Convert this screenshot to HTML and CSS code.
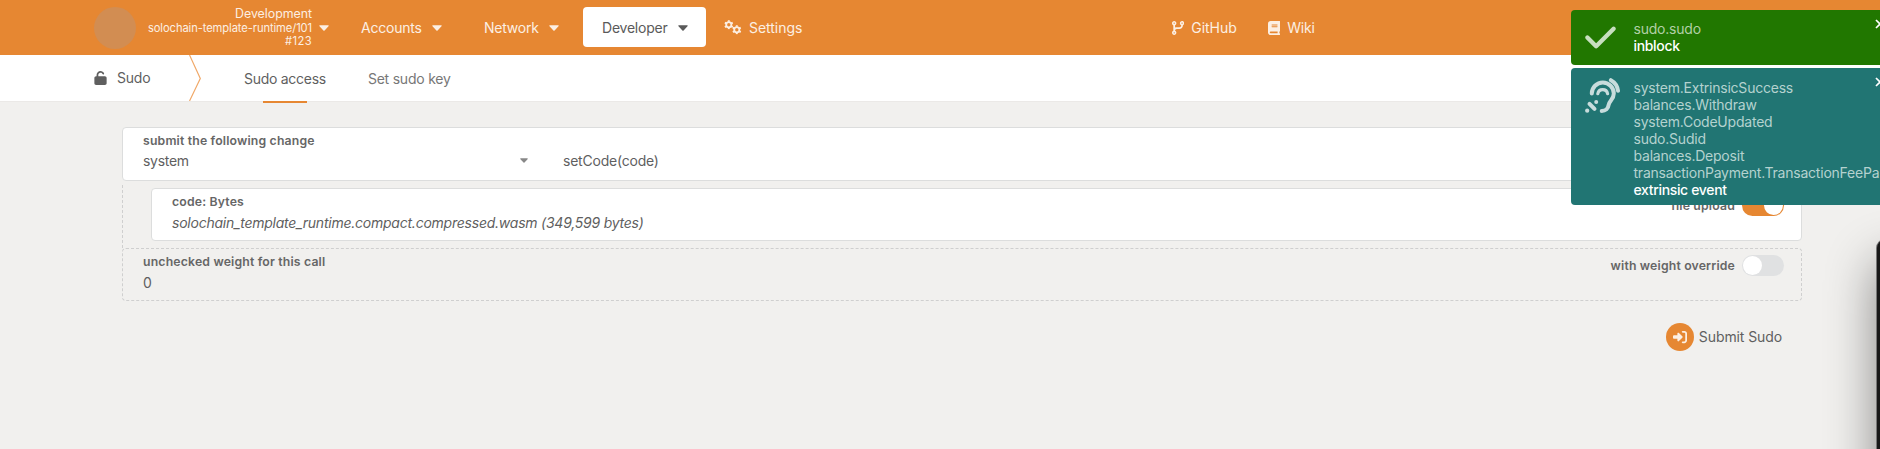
FILE: index.html
```html
<!DOCTYPE html>
<html lang="en">
<head>
<meta charset="utf-8">
<title>Sudo</title>
<link rel="stylesheet" href="styles.css">
</head>
<body>
<svg width="0" height="0" class="defs">
  <symbol id="caret" viewBox="0 0 10 6"><path d="M1 .3h8c.6 0 .9.6.5 1L5.6 5.4c-.4.4-.8.4-1.2 0L.5 1.3C.1.9.4.3 1 .3z" fill="currentColor"/></symbol>
  <symbol id="gear" viewBox="0 0 10 10"><circle cx="5" cy="5" r="2.7" fill="none" stroke="currentColor" stroke-width="1.9"/><path d="M5 .3v1.6M5 8.1v1.6M.9 2.65l1.4.8M7.7 6.55l1.4.8M.9 7.35l1.4-.8M7.7 3.45l1.4-.8" stroke="currentColor" stroke-width="2"/></symbol>
</svg>
<header class="header">
  <span class="logo"></span>
  <div class="chain"><div class="chain-name">Development</div><div>solochain-template-runtime/101</div><div class="block">#123</div></div>
  <svg class="caret chain-caret"><use href="#caret"/></svg>
  <nav class="nav">
    <a class="item accounts">Accounts<svg class="caret"><use href="#caret"/></svg></a>
    <a class="item network">Network<svg class="caret"><use href="#caret"/></svg></a>
    <a class="item active">Developer<svg class="caret"><use href="#caret"/></svg></a>
    <a class="item settings"><svg class="gears" viewBox="0 0 18 15"><use href="#gear" x="0" y="0" width="9.6" height="9.6"/><use href="#gear" x="8" y="5" width="9.6" height="9.6"/></svg>Settings</a>
  </nav>
  <nav class="links">
    <a class="item github"><svg viewBox="0 0 448 512"><path fill="currentColor" d="M80 104a24 24 0 1 0 0-48 24 24 0 1 0 0 48zm80-24c0 32.800-19.700 61-48 73.300l0 87.800c18.800-10.900 40.700-17.100 64-17.100l96 0c35.300 0 64-28.700 64-64l0-6.700C307.700 141 288 112.800 288 80c0-44.200 35.800-80 80-80s80 35.800 80 80c0 32.800-19.700 61-48 73.300l0 6.700c0 70.700-57.300 128-128 128l-96 0c-35.300 0-64 28.700-64 64l0 6.700c28.300 12.300 48 40.500 48 73.300c0 44.200-35.800 80-80 80s-80-35.800-80-80c0-32.800 19.700-61 48-73.300l0-6.700 0-198.700C19.700 141 0 112.800 0 80C0 35.800 35.800 0 80 0s80 35.800 80 80zm232 0a24 24 0 1 0 -48 0 24 24 0 1 0 48 0zM80 456a24 24 0 1 0 0-48 24 24 0 1 0 0 48z"/></svg>GitHub</a>
    <a class="item wiki"><svg viewBox="0 0 448 512"><path fill="currentColor" d="M96 0C43 0 0 43 0 96L0 416c0 53 43 96 96 96l288 0 32 0c17.700 0 32-14.300 32-32s-14.300-32-32-32l0-64c17.700 0 32-14.300 32-32l0-320c0-17.700-14.300-32-32-32L384 0 96 0zm0 384l256 0 0 64L96 448c-17.700 0-32-14.300-32-32s14.300-32 32-32zm32-240c0-8.800 7.200-16 16-16l192 0c8.800 0 16 7.200 16 16s-7.200 16-16 16l-192 0c-8.800 0-16-7.200-16-16zm16 48l192 0c8.800 0 16 7.200 16 16s-7.200 16-16 16l-192 0c-8.800 0-16-7.200-16-16s7.200-16 16-16z"/></svg>Wiki</a>
  </nav>
</header>
<div class="tabs">
  <div class="section"><svg viewBox="0 0 448 512"><path fill="currentColor" d="M144 144c0-44.200 35.800-80 80-80c31.900 0 59.400 18.600 72.300 45.700c7.600 16 26.700 22.800 42.600 15.200s22.800-26.700 15.200-42.600C331 33.700 281.500 0 224 0C144.500 0 80 64.500 80 144l0 48-16 0c-35.300 0-64 28.700-64 64L0 448c0 35.300 28.700 64 64 64l320 0c35.300 0 64-28.700 64-64l0-192c0-35.300-28.700-64-64-64l-240 0 0-48z"/></svg>Sudo</div>
  <svg class="divider" viewBox="0 0 12 46"><path d="M.5 0L11.300 23.500.5 46" fill="none" stroke="#f0a868" stroke-width="1.200"/></svg>
  <a class="tab current">Sudo access</a>
  <a class="tab">Set sudo key</a>
</div>
<main class="content">
  <section class="card call">
    <label>submit the following change</label>
    <div class="selects"><div class="select">system<svg class="small-caret"><use href="#caret"/></svg></div><div>setCode(code)</div></div>
  </section>
  <div class="params">
    <section class="card param">
      <div><label>code: Bytes</label><div class="file">solochain_template_runtime.compact.compressed.wasm (349,599 bytes)</div></div>
      <div class="switch"><label>file upload</label><span class="toggle on"></span></div>
    </section>
  </div>
  <section class="card weight">
    <div><label>unchecked weight for this call</label><div class="value">0</div></div>
    <div class="switch"><label>with weight override</label><span class="toggle"></span></div>
  </section>
  <div class="actions"><span class="round"><svg viewBox="0 0 512 512"><path fill="currentColor" d="M217.900 105.900L340.700 228.700c7.200 7.200 11.300 17.100 11.300 27.300s-4.100 20.100-11.300 27.300L217.900 406.100c-6.400 6.400-15 9.900-24 9.900c-18.700 0-33.900-15.200-33.900-33.900l0-62.100L32 320c-17.700 0-32-14.300-32-32l0-64c0-17.700 14.300-32 32-32l128 0 0-62.100c0-18.700 15.200-33.900 33.900-33.900c9 0 17.600 3.600 24 9.900zM352 416l64 0c17.700 0 32-14.300 32-32l0-256c0-17.700-14.300-32-32-32l-64 0c-17.700 0-32-14.300-32-32s14.300-32 32-32l64 0c53 0 96 43 96 96l0 256c0 53-43 96-96 96l-64 0c-17.700 0-32-14.300-32-32s14.300-32 32-32z"/></svg></span><span class="action-label">Submit Sudo</span></div>
</main>
<div class="window-clip"><div class="window"></div></div>
<aside class="toasts">
  <div class="toast success">
    <svg class="check" viewBox="0 0 448 512"><path fill="currentColor" d="M438.600 105.400c12.500 12.500 12.500 32.800 0 45.300l-256 256c-12.500 12.500-32.800 12.500-45.300 0l-128-128c-12.500-12.500-12.500-32.800 0-45.300s32.800-12.500 45.300 0L160 338.700 393.400 105.400c12.500-12.500 32.800-12.500 45.300 0z"/></svg>
    <div class="lines"><div>sudo.sudo</div><div class="status">inblock</div></div>
    <svg class="close" viewBox="0 0 10 10"><path d="M1 1l8 8M9 1l-8 8" stroke="#fff" stroke-width="1.700"/></svg>
  </div>
  <div class="toast event">
    <svg class="ear" viewBox="0 0 35 35"><g fill="none" stroke="currentColor" stroke-width="4" stroke-linecap="round"><path d="M6.800 15.500a11 11 0 0 1 22 0c0 6-4.600 7.200-5.200 11.500-.4 3.600-3 6-6.900 6"/><path d="M12.800 15.700a5 5 0 0 1 9.800 0" stroke-width="3.200"/><path d="M25.900 2.200a14 14 0 0 1 7.100 10.600"/><path d="M4.500 25.800l5 5"/></g><circle cx="11.200" cy="24" r="2" fill="currentColor"/><circle cx="2.200" cy="32.700" r="2.100" fill="currentColor"/></svg>
    <div class="lines"><div>system.ExtrinsicSuccess</div><div>balances.Withdraw</div><div>system.CodeUpdated</div><div>sudo.Sudid</div><div>balances.Deposit</div><div>transactionPayment.TransactionFeePa</div><div class="status">extrinsic event</div></div>
    <svg class="close" viewBox="0 0 10 10"><path d="M1 1l8 8M9 1l-8 8" stroke="#fff" stroke-width="1.700"/></svg>
  </div>
</aside>
</body>
</html>
```
FILE: styles.css
```css
* { box-sizing: border-box; }
html { overflow: hidden; }
body { margin: 0; width: 1880px; height: 449px; overflow: hidden; position: relative; background: #f1f0ee; color: #5f5f5f; font: 14px/17px Inter, "Liberation Sans", sans-serif; letter-spacing: -0.22px; }
.defs { position: absolute; }
svg { flex: none; }
.header { height: 55px; padding-left: 94px; background: #e68732; color: #fcefe3; display: flex; align-items: center; }
.logo { width: 42px; height: 42px; border-radius: 50%; background: #d28d52; }
.chain { width: 176px; padding-bottom: 1px; text-align: right; font-size: 11.2px; line-height: 13px; letter-spacing: -0.1px; }
.chain-name { font-size: 12.4px; line-height: 15px; height: 16px; letter-spacing: -0.04px; }
.block { letter-spacing: 0.4px; }
.caret { width: 10px; height: 6px; margin-left: 10px; }
.chain-caret { margin-left: 7px; }
.nav, .links { display: flex; align-items: center; height: 55px; padding-bottom: 1px; }
.item { display: flex; align-items: center; height: 40px; padding-top: 1px; white-space: nowrap; }
.nav { width: 843px; padding-left: 32px; }
.accounts { width: 123px; }
.network { width: 99px; }
.active { width: 123px; padding-left: 19px; background: #fff; border-radius: 4px; color: #5a5a5a; }
.settings { padding-left: 18px; letter-spacing: -0.04px; }
.gears { width: 18px; height: 15px; margin-right: 7px; }
.github { width: 96px; letter-spacing: -0.04px; }
.github svg, .wiki svg { width: 12.25px; height: 14px; margin-right: 7px; }
.tabs { height: 47px; padding-left: 94px; background: #fff; border-bottom: 1px solid #ebe9e7; display: flex; color: #666; }
.section { width: 95px; height: 46px; display: flex; align-items: center; gap: 10px; color: #5f5f5f; padding-bottom: 1px; }
.section svg { width: 13px; height: 14px; }
.divider { width: 12px; height: 46px; margin-right: 43px; }
.tab { height: 48px; padding-top: 15px; margin-right: 42px; color: #777; }
.current { color: #5f5f5f; display: flex; flex-direction: column; align-items: center; justify-content: space-between; letter-spacing: -0.28px; }
.current::after { content: ""; width: 44px; height: 2px; background: #e68732; }
.content { padding: 25px 78px 0 122px; }
label { display: block; font-size: 12.25px; line-height: 15px; font-weight: 600; letter-spacing: 0.17px; color: #666; }
.card { background: #fff; border: 1px solid #dcdddd; border-radius: 4px; display: flex; justify-content: space-between; padding-left: 20px; }
.call { height: 54px; flex-direction: column; justify-content: flex-start; padding-top: 5px; }
.selects { display: flex; padding-top: 4px; }
.select { width: 420px; padding-right: 35px; display: flex; align-items: center; justify-content: space-between; letter-spacing: -0.3px; }
.small-caret { width: 8px; height: 5px; color: #888; }
.params { margin-top: 4px; padding: 3px 0 7px 28px; border-left: 1px dashed #cfcfcf; height: 63px; }
.param { height: 53px; padding-top: 5px; padding-left: 20px; }
.file { font-style: italic; padding-top: 5px; letter-spacing: -0.235px; }
.switch { height: 21px; display: flex; align-items: center; gap: 7px; margin-right: 17px; }
.param .switch { margin-top: 1px; }
.toggle { width: 42px; height: 21px; padding: 1px; border-radius: 11px; background: #e0e1e2; display: flex; }
.toggle::after { content: ""; width: 19px; height: 19px; border-radius: 50%; background: #fff; }
.toggle.on { background: #e68732; justify-content: flex-end; }
.weight { height: 53px; background: transparent; border: 1px dashed #cfcfcf; padding-top: 5px; }
.weight .switch { margin-top: 1px; }
.value { padding-top: 5px; }
.actions { display: flex; justify-content: flex-end; align-items: center; gap: 5px; padding-right: 20px; margin-top: 22px; height: 28px; letter-spacing: -0.1px; }
.action-label { padding-bottom: 1px; }
.round { width: 28px; height: 28px; border-radius: 50%; background: #e68732; color: #fcefe3; display: flex; align-items: center; justify-content: center; }
.round svg { width: 14px; height: 14px; }
.window-clip { position: absolute; right: 0; top: 200px; width: 100px; height: 249px; overflow: hidden; }
.window { position: absolute; left: 97px; top: 40px; width: 300px; height: 500px; background: #181818; border-radius: 8px; box-shadow: 0 0 0 1px #777, 0 22px 50px rgba(0, 0, 0, .45); }
.toasts { position: absolute; left: 1571px; top: 10px; width: 309px; overflow: hidden; display: flex; flex-direction: column; gap: 3px; }
.toast { position: relative; display: flex; width: 320px; border-radius: 4px; white-space: nowrap; }
.success { height: 55px; background: #217700; color: #c8dfc0; }
.event { height: 137px; background: #217573; color: #c8dcdc; }
.lines { position: absolute; left: 62.5px; top: 11px; color: #b4d2cf; letter-spacing: -0.22px; }
.success .lines { top: 10px; color: #b2d0a6; }
.lines .status { color: #fff; font-weight: 500; letter-spacing: -0.34px; }
.check { width: 31px; height: 35px; margin: 10px 0 0 14px; }
.ear { width: 35px; height: 35px; margin: 10px 0 0 14px; }
.close { position: absolute; left: 304px; top: 9px; width: 10px; height: 10px; }
```
